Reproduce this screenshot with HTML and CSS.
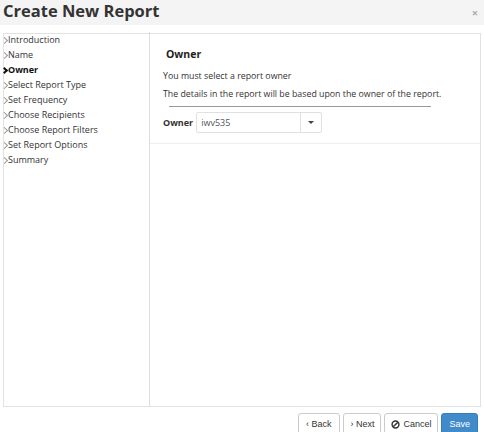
FILE: index.html
```html
<!DOCTYPE html>
<html lang="en">
<head>
    <meta charset="UTF-8">
    <title>Create New Report</title>
    <link rel="stylesheet" href="styles.css">
</head>
<body>
    <div class="modal-header">
        <h1>Create New Report</h1>
        <span class="close">&times;</span>
    </div>

    <div class="wizard">
        <!-- step list -->
        <ul class="steps">
            <li>Introduction</li>
            <li>Name</li>
            <li class="active">Owner</li>
            <li>Select Report Type</li>
            <li>Set Frequency</li>
            <li>Choose Recipients</li>
            <li>Choose Report Filters</li>
            <li>Set Report Options</li>
            <li>Summary</li>
        </ul>

        <div class="step-body">
            <div class="section">
                <h2>Owner</h2>
                <p>You must select a report owner</p>
                <p>The details in the report will be based upon the owner of the report.</p>
                <hr>
                <div class="field">
                    <label>Owner</label>
                    <div class="select">
                        <span class="value">iwv535</span>
                        <span class="caret-box"><span class="caret"></span></span>
                    </div>
                </div>
            </div>
        </div>
    </div>

    <div class="modal-footer">
        <button class="btn btn-back">&lsaquo; Back</button>
        <button class="btn">&rsaquo; Next</button>
        <button class="btn">
            <svg width="9" height="9" viewBox="0 0 10 10"><circle cx="5" cy="5" r="3.8" fill="none" stroke="#333" stroke-width="1.6"/><line x1="2.4" y1="7.6" x2="7.6" y2="2.4" stroke="#333" stroke-width="1.6"/></svg>
            Cancel
        </button>
        <button class="btn btn-primary">Save</button>
    </div>
</body>
</html>
```

FILE: styles.css
```css
body {
    margin: 0;
    font-family: "Open Sans", "Liberation Sans", sans-serif;
    color: #333;
    background: #fff;
    width: 484px;
}
.modal-header {
    background: #f4f4f4;
    height: 25px;
    display: flex;
    justify-content: space-between;
    align-items: center;
    padding: 0 6px 0 3px;
}
.modal-header h1 {
    margin: 0;
    font-size: 16.5px;
    font-weight: bold;
    color: #333;
    line-height: 20px;
    margin-top: -3px;
}
.close {
    color: #aaa;
    font-size: 11px;
    font-weight: bold;
}
.wizard {
    display: flex;
    margin: 8px 3px 0 3px;
    height: 374px;
    border: 1px solid #e2e2e2;
    box-sizing: border-box;
}
.steps {
    list-style: none;
    margin: 0;
    padding: 0;
    margin-top: -2px;
    width: 145px;
    border-right: 1px solid #ddd;
    font-size: 9px;
}
.steps li {
    line-height: 15px;
    height: 15px;
}
.steps li::before {
    content: "";
    display: inline-block;
    width: 4px;
    height: 4px;
    border-right: 1px solid #999;
    border-top: 1px solid #999;
    transform: rotate(45deg);
    margin: 0 1px 1px -2px;
    vertical-align: middle;
}
.steps li.active {
    font-weight: bold;
    color: #111;
}
.steps li.active::before {
    border-color: #111;
    border-width: 2px;
    width: 3px;
    height: 3px;
}
.step-body {
    flex: 1;
}
.section {
    border-bottom: 1px solid #eee;
    padding: 13px 16px 8px 13px;
    height: 88px;
}
.section h2 {
    margin: 0 0 9px 3px;
    font-size: 10.5px;
    font-weight: bold;
    color: #222;
}
.section p {
    margin: 0 0 5px 0;
    font-size: 8.8px;
    line-height: 12px;
}
.section p + p {
    margin-top: 6px;
}
.section hr {
    border: none;
    border-top: 1px solid #999;
    margin: 6px 33px 5px 6px;
}
.field {
    display: flex;
    align-items: center;
}
.field label {
    font-size: 9px;
    font-weight: bold;
    margin-right: 3px;
}
.select {
    display: flex;
    width: 126px;
    height: 21px;
    border: 1px solid #e0e0e0;
    border-radius: 2px;
    box-sizing: border-box;
    font-size: 9px;
    color: #555;
}
.select .value {
    flex: 1;
    line-height: 19px;
    padding-left: 4px;
}
.caret-box {
    width: 20px;
    border-left: 1px solid #e0e0e0;
    display: flex;
    align-items: center;
    justify-content: center;
}
.caret {
    border-left: 3px solid transparent;
    border-right: 3px solid transparent;
    border-top: 3px solid #444;
}
.modal-footer {
    display: flex;
    justify-content: flex-end;
    gap: 3px;
    padding: 6px 6px 0 0;
}
.btn {
    font-family: "Liberation Sans", Arial, sans-serif;
    font-size: 9px;
    color: #333;
    background: #fff;
    border: 1px solid #ccc;
    border-radius: 3px;
    height: 24px;
    padding: 0 6px 2px 6px;
    display: flex;
    align-items: center;
    gap: 3px;
}
.btn-back {
    padding: 0 8px 2px 7px;
}
.btn-primary {
    background: #428bca;
    border-color: #357ebd;
    color: #fff;
    padding: 0 7px 2px 7px;
}
```
